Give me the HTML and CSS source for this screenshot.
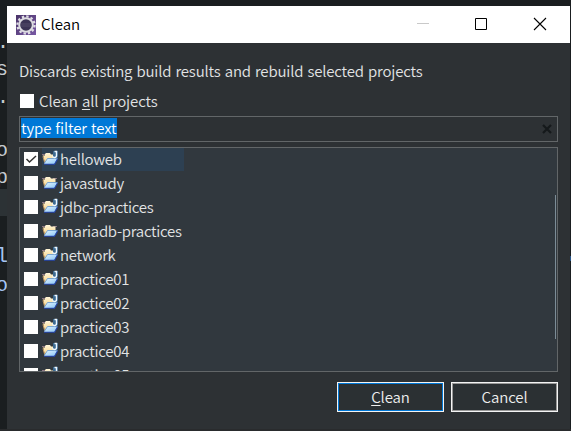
FILE: index.html
```html
<!DOCTYPE html>
<html lang="en">
<head>
<meta charset="utf-8">
<title>Clean</title>
<link rel="stylesheet" href="styles.css">
</head>
<body>
<svg width="0" height="0" class="defs">
  <defs>
    <linearGradient id="cream" x1="0" y1="0" x2="0" y2="1"><stop offset="0" stop-color="#fff6d8"/><stop offset="1" stop-color="#f6d080"/></linearGradient>
    <linearGradient id="blue" x1="0" y1="0" x2="1" y2="1"><stop offset="0" stop-color="#e2f4ff"/><stop offset="1" stop-color="#88c4f4"/></linearGradient>
    <linearGradient id="purple" x1="0" y1="0" x2="1" y2="1"><stop offset="0" stop-color="#493367"/><stop offset="1" stop-color="#7959a5"/></linearGradient>
    <symbol id="folder" viewBox="0 0 17 16">
      <path d="M0 4.500h3M11 4.500h4" fill="none" stroke="#8d7884"/>
      <path d="M1 5.500h2V4l1-1h4l1 1.500h4.500V9H6l-3 4.500z" fill="url(#cream)"/>
      <path d="M1.200 5.500v2l1.500 5" fill="none" stroke="#c69b62"/>
      <path d="M5.500 8.500h10l-3 5.500H2z" fill="url(#blue)"/>
      <path d="M2.500 13l3-4.500h10" fill="none" stroke="#5f96d0" stroke-width=".8"/>
      <path d="M2 14.200h10.500l3-5.200" fill="none" stroke="#2546b0" stroke-width="1.100"/>
    </symbol>
    <symbol id="jmark" viewBox="0 0 17 16">
      <path d="M11 1h5v6l-1 1h-4z" fill="#3c6a91"/>
      <path d="M12.500 1.500h2v4q0 2-2 2t-1.500-1.500" fill="none" stroke="#eef7ff" stroke-width="1.400"/>
    </symbol>
  </defs>
</svg>
<div class="editor">
  <span class="code c1">.</span><span class="code c2">s</span><span class="code c3">.</span><span class="code c4">o</span><span class="code c5">p</span><span class="code c6">l</span><span class="code c7">o</span>
  <i class="line"></i><i class="edge"></i>
</div>
<main class="dialog">
  <header class="titlebar">
    <svg class="gear" viewBox="0 0 20 20"><rect width="20" height="20" fill="url(#purple)"/><circle cx="10" cy="10" r="8.600" fill="none" stroke="#e0dfe5" stroke-width="2.200" stroke-dasharray="2.400 2.100"/><circle cx="10" cy="10" r="6.800" fill="#3b3355" stroke="#dddce1" stroke-width="2"/><path d="M5 9h10M5 11h10" stroke="#554d6a"/></svg>
    <span class="title">Clean</span>
    <svg class="controls" viewBox="0 0 141 37"><path d="M0 17.500h12" stroke="#c9c9c9"/><path d="M58.500 12.500h11v11h-11z" fill="none" stroke="#000"/><path d="M117 12l12 12M129 12l-12 12" stroke="#000" stroke-width="1.100"/></svg>
  </header>
  <section class="content">
    <p class="description">Discards existing build results and rebuild selected projects</p>
    <label class="all"><i class="box"></i><span>Clean <u>a</u>ll projects</span></label>
    <div class="filter"><span>type filter text</span><svg viewBox="0 0 10 10"><path d="M1 1l8 8M9 1L1 9" stroke="#15191b" stroke-width="2.200"/></svg></div>
    <div class="list">
      <div class="row"><i class="box"><svg viewBox="0 0 14 14"><path d="M2.500 7l3 3L12 4" fill="none" stroke="#333" stroke-width="1.500"/></svg></i><div class="item selected"><svg class="icon"><use href="#folder"/><use href="#jmark"/></svg><span>helloweb</span></div></div>
      <div class="row"><i class="box"></i><div class="item"><svg class="icon"><use href="#folder"/></svg><span>javastudy</span></div></div>
      <div class="row"><i class="box"></i><div class="item"><svg class="icon"><use href="#folder"/><use href="#jmark"/></svg><span>jdbc-practices</span></div></div>
      <div class="row"><i class="box"></i><div class="item"><svg class="icon"><use href="#folder"/></svg><span>mariadb-practices</span></div></div>
      <div class="row"><i class="box"></i><div class="item"><svg class="icon"><use href="#folder"/><use href="#jmark"/></svg><span>network</span></div></div>
      <div class="row"><i class="box"></i><div class="item"><svg class="icon"><use href="#folder"/><use href="#jmark"/></svg><span>practice01</span></div></div>
      <div class="row"><i class="box"></i><div class="item"><svg class="icon"><use href="#folder"/><use href="#jmark"/></svg><span>practice02</span></div></div>
      <div class="row"><i class="box"></i><div class="item"><svg class="icon"><use href="#folder"/><use href="#jmark"/></svg><span>practice03</span></div></div>
      <div class="row"><i class="box"></i><div class="item"><svg class="icon"><use href="#folder"/><use href="#jmark"/></svg><span>practice04</span></div></div>
      <div class="row"><i class="box"></i><div class="item"><svg class="icon"><use href="#folder"/><use href="#jmark"/></svg><span>practice05</span></div></div>
      <i class="thumb"></i>
    </div>
    <footer><button class="primary"><u>C</u>lean</button><button>Cancel</button></footer>
  </section>
</main>
</body>
</html>
```
FILE: styles.css
```css
* { box-sizing: border-box; }
body { margin: 0; width: 571px; height: 431px; padding: 6px 1px 0 7px; overflow: hidden; position: relative; background: #1a1e20; color: #e2e4e5; font: 350 15px/24px "Noto Sans CJK KR", "Noto Sans", sans-serif; }
.defs { position: absolute; }
.editor { position: absolute; inset: 0; overflow: hidden; border-bottom: 2px solid #292b2d; }
.code { position: absolute; left: -4px; font: 20px/24px "Liberation Mono", monospace; color: #c5cbd0; }
.c1 { top: 31px; left: -3px; } .c2 { top: 58px; left: -4px; } .c3 { top: 86px; left: -3px; }
.c4 { top: 139px; left: -4px; } .c5 { top: 166px; left: -4px; } .c6 { top: 245px; color: #a6c5f5; } .c7 { top: 274px; left: -4px; color: #a6c5f5; }
.line { position: absolute; left: 0; top: 189px; width: 7px; height: 27px; background: #2c3235; }
.edge { position: absolute; right: 0; top: 256px; width: 1px; height: 5px; background: #285486; }
.dialog { position: relative; width: 563px; height: 423px; background: #2d3134; }
.titlebar { height: 37px; background: #fff; color: #000; display: flex; align-items: center; padding-left: 9px; }
.gear { width: 20px; height: 20px; }
.title { margin-left: 5px; margin-top: -1px; }
.controls { width: 141px; height: 37px; margin-left: auto; margin-right: 12px; }
.content { padding: 17px 12px 0; }
.description { margin: 0; height: 29px; white-space: nowrap; letter-spacing: -.17px; word-spacing: 1px; position: relative; top: -1px; }
.all { display: flex; align-items: center; height: 24px; gap: 5px; margin-bottom: 3px; padding-left: 1px; letter-spacing: -.1px; word-spacing: 1px; }
.box { width: 14px; height: 14px; flex: none; background: #fff; display: block; }
.box svg { display: block; width: 14px; height: 14px; }
u { text-decoration: underline; text-decoration-thickness: 1px; text-underline-offset: 2px; }
.filter { height: 26px; border: 1px solid #626668; display: flex; justify-content: space-between; padding: 0 5px 0 1px; align-items: center; }
.filter span { height: 20px; line-height: 20px; margin-bottom: 3px; background: #0078d7; color: #fff; width: 96px; white-space: nowrap; letter-spacing: -.1px; word-spacing: .8px; }
.filter svg { width: 10px; height: 10px; margin-top: 0; }
.list { position: relative; height: 225px; margin-top: 5px; border: 1px solid #626668; background: #31383e; overflow: hidden; padding-left: 4px; }
.row { height: 24px; display: flex; align-items: flex-start; gap: 4px; }
.row .box { margin-top: 4px; }
.item { height: 23px; display: flex; line-height: 22px; white-space: nowrap; letter-spacing: -.27px; }
.selected { width: 142px; background: #2d4052; }
.icon { width: 17px; height: 16px; margin: 2px 1px 0 0; flex: none; }
.thumb { position: absolute; right: 1px; top: 47px; width: 1px; height: 144px; background: #7c8c96; }
footer { display: flex; justify-content: flex-end; gap: 7px; margin-top: 10px; }
button { width: 107px; height: 30px; padding: 0; border: 1px solid #f4f4f4; box-shadow: inset 0 0 0 1px #999; background: #2b3033; color: #eee; font: inherit; letter-spacing: -.1px; }
.primary { box-shadow: inset 0 0 0 1px #0078d7; }
```
